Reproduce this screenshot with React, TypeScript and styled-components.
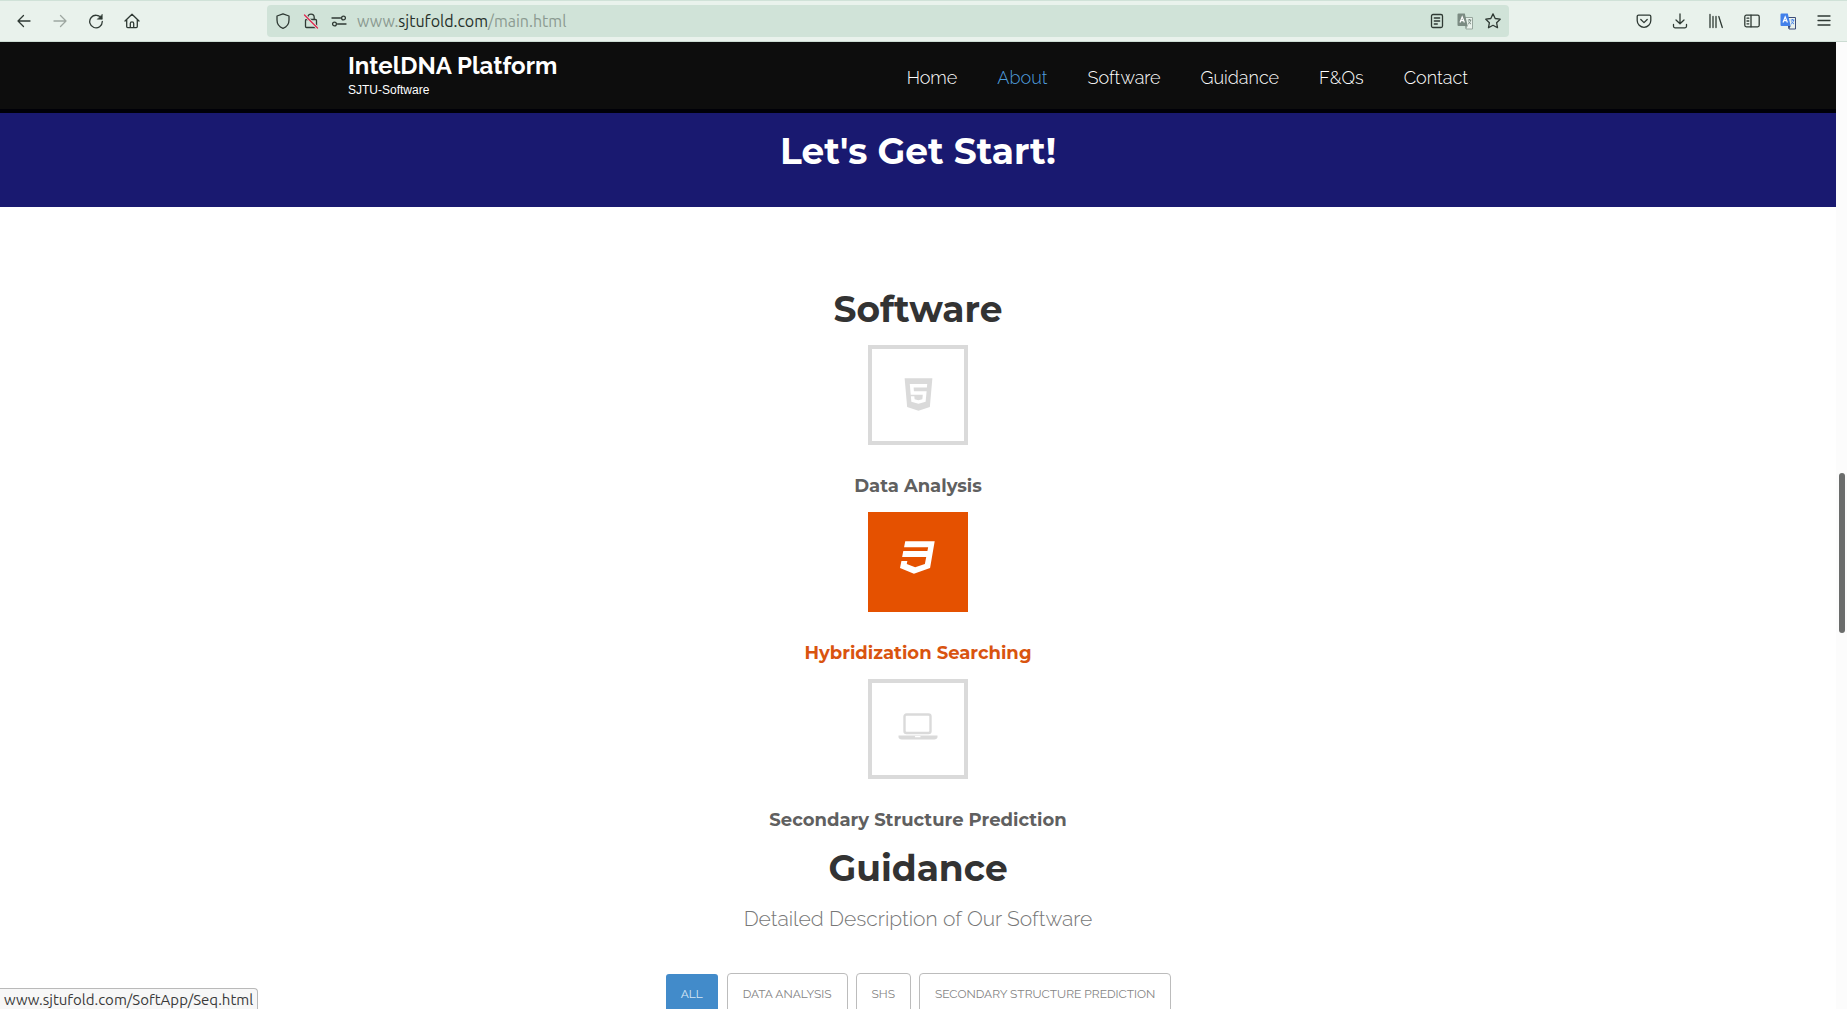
import React from "react";
import styled, { createGlobalStyle, css } from "styled-components";
import { FaHtml5, FaCss3 } from "react-icons/fa";

const display = `Montserrat, Inter, "Open Sans", sans-serif`;
const body = `Raleway, Lato, "Open Sans", sans-serif`;
const chrome = `Ubuntu, "Open Sans", "Noto Sans", sans-serif`;

const Global = createGlobalStyle`
  *, *::before, *::after { box-sizing: border-box; }
  body { margin: 0; background: #fff; overflow: hidden; }
  a { color: inherit; text-decoration: none; }
  button { font: inherit; color: inherit; }
  h1, h2, h3, p, ul { margin: 0; padding: 0; }
`;

const Window = styled.div`
  display: flex;
  flex-direction: column;
  height: 100vh;
  overflow: hidden;
`;

const Toolbar = styled.header`
  display: flex;
  align-items: center;
  flex: none;
  height: 42px;
  padding: 0 5px 0 6px;
  background: #e9f2ec;
  border-top: 1px solid #d0e2d8;
  border-bottom: 1px solid #ccdcd3;
  color: #2f3a34;
  font-family: ${chrome};
`;

const ToolGroup = styled.div`
  display: flex;
  flex: none;
`;

const ToolButton = styled.button<{ $small?: boolean; $faded?: boolean }>`
  display: grid;
  place-items: center;
  width: ${(p) => (p.$small ? 28 : 36)}px;
  height: 32px;
  padding: 0;
  border: 0;
  background: none;
  opacity: ${(p) => (p.$faded ? 0.4 : 1)};
`;

const AddressBar = styled.form`
  display: flex;
  align-items: center;
  flex: 1;
  height: 32px;
  margin: 0 117px;
  padding: 0 2px;
  border-radius: 4px;
  background: #d0e3d8;
`;

const Address = styled.a`
  flex: 1;
  padding-left: 4px;
  font-size: 16px;
  line-height: 20px;
  color: #8b9a91;
  strong { font-weight: 400; color: #26302a; }
`;

const Viewport = styled.div`
  position: relative;
  display: flex;
  flex: 1;
  min-height: 0;
`;

const Page = styled.div`
  flex: 1;
  min-width: 0;
  overflow: hidden;
  background: #fff;
  text-align: center;
`;

const ScrollTrack = styled.div`
  flex: none;
  width: 11px;
  padding: 431px 3px 0 3px;
  background: #fcfcfc;
`;

const ScrollThumb = styled.div`
  width: 6px;
  height: 160px;
  border-radius: 3px;
  background: #6b6d6c;
`;

const SiteHeader = styled.div`
  height: 71px;
  background: #0d0d0d;
  border-bottom: 4px solid #000007;
  color: #fff;
`;

const Container = styled.div`
  display: flex;
  justify-content: space-between;
  max-width: 1140px;
  margin: 0 auto;
`;

const Brand = styled.a`
  padding-top: 9px;
  text-align: left;
  font: 700 24px/30px ${body};
`;

const Tagline = styled.span`
  display: block;
  font: 400 12px/18px "Liberation Sans", Arial, sans-serif;
`;

const Nav = styled.nav`
  display: flex;
  padding-top: 23px;
  font: 300 18px/26px ${body};
`;

const NavLink = styled.a<{ $active?: boolean }>`
  padding: 0 20px;
  color: ${(p) => (p.$active ? "#4f9ede" : "#fff")};
`;

const Banner = styled.section`
  height: 94px;
  padding-top: 18px;
  background: #191970;
  color: #fff;
`;

const Title = styled.h2`
  font: 700 36px/40px ${display};
`;

const Main = styled.main`
  padding-top: 82px;
  color: #333;
`;

const Services = styled.ul`
  && { margin: 16px 0 2px; }
  list-style: none;
`;

const Service = styled.li`
  display: flex;
  flex-direction: column;
  align-items: center;
  height: 167px;
`;

const Tile = styled.a<{ $active?: boolean }>`
  display: flex;
  justify-content: center;
  align-items: flex-start;
  width: 100px;
  height: 100px;
  padding-top: 27px;
  border: 4px solid #dadada;
  color: #dadada;
  ${(p) =>
    p.$active &&
    css`
      border: 0;
      background: #e55100;
      color: #fff;
    `}
`;

const ServiceName = styled.h3<{ $active?: boolean }>`
  && { margin-top: 29px; }
  font: 700 18px/24px ${display};
  color: ${(p) => (p.$active ? "#d9540f" : "#606060")};
`;

const Lead = styled.p`
  && { margin-top: 15px; }
  font: 300 21px/32px ${body};
  color: #777;
`;

const Filters = styled.div`
  display: flex;
  justify-content: center;
  gap: 8px;
  margin-top: 38px;
`;

const Filter = styled.button<{ $active?: boolean }>`
  height: 41px;
  padding: 0 15px;
  border: 1px solid #bcbcbc;
  border-radius: 4px;
  background: #fff;
  color: #858585;
  font: 400 12px/16px ${body};
  text-transform: uppercase;
  ${(p) =>
    p.$active &&
    css`
      border-color: transparent;
      background: #428bca;
      background-clip: padding-box;
      color: #d5e6f4;
    `}
`;

const StatusBubble = styled.div`
  position: absolute;
  left: 0;
  bottom: 0;
  height: 21px;
  padding: 0 4px;
  border: 1px solid #b9b9b9;
  border-width: 1px 1px 0 0;
  border-radius: 0 4px 0 0;
  background: #f7f7f7;
  color: #3a3a3a;
  font: 400 15px/22px ${chrome};
`;

const Icon = ({ children, size = 16 }: { children: React.ReactNode; size?: number }) => (
  <svg width={size} height={size} viewBox="0 0 16 16" fill="none" stroke="currentColor"
    strokeWidth="1.3" strokeLinecap="round" strokeLinejoin="round" aria-hidden="true">
    {children}
  </svg>
);

const Translate = ({ front, back }: { front: string; back: string }) => (
  <svg width="17" height="17" viewBox="0 0 17 17" fill="none" aria-hidden="true">
    <path d="M7 4.5h8.5v11.500H9z" fill="#e9f2ec" stroke={back} />
    <path d="M10.800 7h3.500M12.500 6v1M13.700 7c-.3 2-1.500 3.300-2.500 4M11.500 8.500c.5 1.200 1.500 2 2.500 2.500" stroke={front} />
    <path d="M1.500.5h6.300l2.900 12.500H1.500a1 1 0 0 1-1-1v-10.500a1 1 0 0 1 1-1z" fill={front} />
    <path d="M8 13h2.700L9 16z" fill={back} />
    <path d="M3 9.500l2.200-5.700L7.400 9.500M3.800 7.700h2.800" stroke="#fff" strokeWidth="1.200" />
  </svg>
);

const Laptop = () => (
  <svg width="40" height="36" viewBox="0 0 40 36" aria-hidden="true">
    <rect x="6.500" y="4.500" width="26" height="18.500" rx="2" fill="none" stroke="currentColor" strokeWidth="2.400" />
    <path d="M.5 25.500h39v1.500c0 1.400-1.500 2.500-3.200 2.500H3.700C2 29.500 .5 28.400.5 27z" fill="currentColor" />
    <path d="M17.500 26.700h4.500" stroke="#fff" strokeWidth="1.200" strokeLinecap="round" />
  </svg>
);

const links = ["Home", "About", "Software", "Guidance", "F&Qs", "Contact"];
const services = [
  { name: "Data Analysis", icon: <FaHtml5 size={37} /> },
  { name: "Hybridization Searching", icon: <FaCss3 size={37} />, active: true },
  { name: "Secondary Structure Prediction", icon: <Laptop /> },
];
const filters = ["All", "Data Analysis", "SHS", "Secondary Structure Prediction"];

export default function App() {
  return (
    <Window>
      <Global />
      <Toolbar>
        <ToolGroup>
          <ToolButton aria-label="Back"><Icon><path d="M14 8H2M7.500 2.500L2 8l5.500 5.500" /></Icon></ToolButton>
          <ToolButton aria-label="Forward" $faded><Icon><path d="M2 8h12M8.500 2.500L14 8l-5.500 5.500" /></Icon></ToolButton>
          <ToolButton aria-label="Reload"><Icon><path d="M13.500 5.500A6.300 6.300 0 1 0 14.300 8.500" /><path d="M14.300 1.500v4.800H9.500z" fill="currentColor" strokeWidth=".5" /></Icon></ToolButton>
          <ToolButton aria-label="Home"><Icon><path d="M1 8l7-6.700L15 8M2.700 6.600v7a1 1 0 0 0 1 1h8.600a1 1 0 0 0 1-1v-7M6.300 14.500v-4a1.700 1.700 0 0 1 3.400 0v4" /></Icon></ToolButton>
        </ToolGroup>
        <AddressBar>
          <ToolButton type="button" $small aria-label="Tracking protection"><Icon><path d="M8 .8l6 2.200v4c0 4-2.500 7-6 8.300C4.500 14 2 11 2 7V3z" /></Icon></ToolButton>
          <ToolButton type="button" $small aria-label="Connection not secure"><Icon><path d="M4.800 6.500V4.300a3.200 3.200 0 0 1 6.400 0v2.200M3.500 6.500h9a1 1 0 0 1 1 1v6a1 1 0 0 1-1 1h-9a1 1 0 0 1-1-1v-6a1 1 0 0 1 1-1z" /><path d="M1.500 2l13 13" stroke="#d0e3d8" strokeWidth="3" /><path d="M1.500 2l13 13" stroke="#e22850" /></Icon></ToolButton>
          <ToolButton type="button" $small aria-label="Permissions"><Icon><path d="M1 5h8.500M6.500 11H15" /><circle cx="12.500" cy="5" r="1.900" /><circle cx="3.500" cy="11" r="1.900" /></Icon></ToolButton>
          <Address href="#main">www.<strong>sjtufold.com</strong>/main.html</Address>
          <ToolButton type="button" $small aria-label="Reader view"><Icon><rect x="2.500" y="1.500" width="11" height="13" rx="1.500" /><path d="M5.300 5h5.400M5.300 8h5.400M5.300 11h3" /></Icon></ToolButton>
          <ToolButton type="button" $small aria-label="Translate page"><Translate front="#7b8b82" back="#98a79e" /></ToolButton>
          <ToolButton type="button" $small aria-label="Bookmark"><Icon><path d="M8 .9l2.200 4.600 5 .7-3.600 3.500.9 5L8 12.300l-4.500 2.400.9-5L.8 6.200l5-.7z" /></Icon></ToolButton>
        </AddressBar>
        <ToolGroup>
          <ToolButton aria-label="Save to Pocket"><Icon><path d="M2.500 2.200h11a1.300 1.300 0 0 1 1.300 1.300v4a6.800 6.800 0 0 1-13.600 0v-4a1.300 1.300 0 0 1 1.300-1.300zM4.800 6.500L8 9.600l3.200-3.100" /></Icon></ToolButton>
          <ToolButton aria-label="Downloads"><Icon><path d="M8 1v9.500M4 7l4 3.800L12 7M1.500 11.500v1.800a1.500 1.500 0 0 0 1.500 1.500h10a1.500 1.500 0 0 0 1.500-1.500v-1.800" /></Icon></ToolButton>
          <ToolButton aria-label="Library"><Icon><path d="M2 1.500v13M5 3.500v11M8 3.500v11M10.800 3.500l3.500 11" /></Icon></ToolButton>
          <ToolButton aria-label="Sidebar"><Icon><rect x=".8" y="2.200" width="14.400" height="11.600" rx="1.500" /><path d="M7 2.200v11.600M3 5.200h1.800M3 8h1.800M3 10.800h1.800" /></Icon></ToolButton>
          <ToolButton aria-label="Translate"><Translate front="#4280ea" back="#3d4d78" /></ToolButton>
          <ToolButton aria-label="Menu"><Icon><path d="M2 3h12M2 7.500h12M2 12h12" /></Icon></ToolButton>
        </ToolGroup>
      </Toolbar>
      <Viewport>
        <Page>
          <SiteHeader>
            <Container>
              <Brand href="#home">IntelDNA Platform<Tagline>SJTU-Software</Tagline></Brand>
              <Nav>
                {links.map((l) => (
                  <NavLink key={l} href={`#${l.toLowerCase()}`} $active={l === "About"}>{l}</NavLink>
                ))}
              </Nav>
            </Container>
          </SiteHeader>
          <Banner><Title>Let's Get Start!</Title></Banner>
          <Main>
            <Title>Software</Title>
            <Services>
              {services.map((s) => (
                <Service key={s.name}>
                  <Tile href="#software" aria-label={s.name} $active={s.active}>{s.icon}</Tile>
                  <ServiceName $active={s.active}>{s.name}</ServiceName>
                </Service>
              ))}
            </Services>
            <Title>Guidance</Title>
            <Lead>Detailed Description of Our Software</Lead>
            <Filters>
              {filters.map((f, i) => (
                <Filter key={f} $active={i === 0}>{f}</Filter>
              ))}
            </Filters>
          </Main>
        </Page>
        <ScrollTrack><ScrollThumb /></ScrollTrack>
        <StatusBubble>www.sjtufold.com/SoftApp/Seq.html</StatusBubble>
      </Viewport>
    </Window>
  );
}
